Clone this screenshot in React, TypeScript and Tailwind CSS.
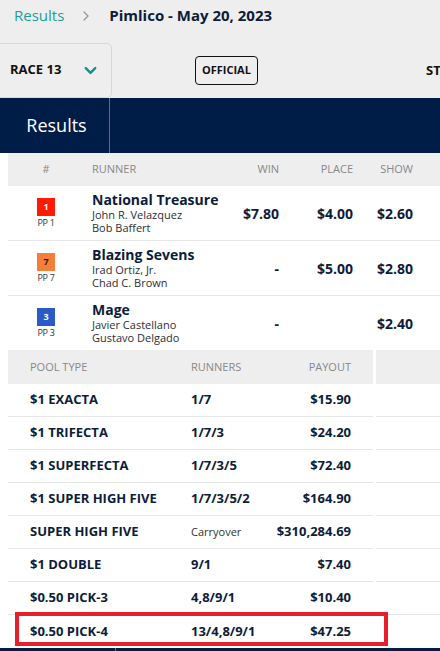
import { ChevronDown, ChevronRight } from "lucide-react";

const runners = [
    { pp: 1, color: "bg-[#ff1a00]", num: "text-white", name: "National Treasure", jockey: "John R. Velazquez", trainer: "Bob Baffert", win: "$7.80", place: "$4.00", show: "$2.60" },
    { pp: 7, color: "bg-[#f57e3b]", num: "text-[#1c1c1c]", name: "Blazing Sevens", jockey: "Irad Ortiz, Jr.", trainer: "Chad C. Brown", win: "-", place: "$5.00", show: "$2.80" },
    { pp: 3, color: "bg-[#2a5bc9]", num: "text-white", name: "Mage", jockey: "Javier Castellano", trainer: "Gustavo Delgado", win: "-", place: "", show: "$2.40" },
];

const pools = [
    { type: "$1 EXACTA", runners: "1/7", payout: "$15.90" },
    { type: "$1 TRIFECTA", runners: "1/7/3", payout: "$24.20" },
    { type: "$1 SUPERFECTA", runners: "1/7/3/5", payout: "$72.40" },
    { type: "$1 SUPER HIGH FIVE", runners: "1/7/3/5/2", payout: "$164.90" },
    { type: "SUPER HIGH FIVE", runners: "Carryover", payout: "$310,284.69", carry: true },
    { type: "$1 DOUBLE", runners: "9/1", payout: "$7.40" },
    { type: "$0.50 PICK-3", runners: "4,8/9/1", payout: "$10.40" },
    { type: "$0.50 PICK-4", runners: "13/4,8/9/1", payout: "$47.25", marked: true },
];

const App = () => {
    return (
        <div className="w-[440px] h-[651px] overflow-hidden bg-white text-[#0c1c3a] font-['Open_Sans',sans-serif]">
            {/* breadcrumb + race bar */}
            <div className="bg-[#eeeeee]">
                <div className="h-[43px] flex flex-row items-start pt-[4px] pl-[14px] text-[15px]">
                    <span className="text-[#1d9e96]">Results</span>
                    <ChevronRight className="w-[16px] h-[16px] ml-[14px] mr-[15px] mt-[4px] text-[#9a9a9a]" strokeWidth={2} />
                    <span className="font-bold">Pimlico - May 20, 2023</span>
                </div>
                <div className="h-[55px] flex flex-row items-center relative">
                    <div className="h-[55px] w-[113px] -ml-[1px] border border-[#d8d8d8] rounded-r-[5px] flex flex-row items-center pl-[10px] pb-[1px]">
                        <span className="font-bold text-[13px] text-[#111]">RACE 13</span>
                        <ChevronDown className="w-[19px] h-[19px] ml-[20px] text-[#12918a]" strokeWidth={3} />
                    </div>
                    <div className="ml-[83px] h-[29px] px-[6px] border border-[#111] rounded-[4px] flex items-center text-[11px] font-bold text-[#111]">
                        OFFICIAL
                    </div>
                    <span className="absolute left-[426px] top-[18px] font-bold text-[13px] text-[#111]">ST</span>
                </div>
            </div>

            {/* tab bar */}
            <div className="h-[55px] bg-[#001d48] flex flex-row">
                <div className="w-[110px] border-r border-[#1a8f8c] flex items-center justify-center text-white text-[18px] pl-[4px]">
                    Results
                </div>
            </div>

            <div className="pl-2">
                {/* runners */}
                <div className="h-[33px] bg-[#eeeeee] flex flex-row items-center text-[11px] text-[#888]">
                    <div className="w-[76px] text-center">#</div>
                    <div className="w-[136px] pl-2">RUNNER</div>
                    <div className="w-[59px] text-right">WIN</div>
                    <div className="w-[74px] text-right">PLACE</div>
                    <div className="w-[60px] text-right">SHOW</div>
                </div>
                {runners.map((r, i) => (
                    <div key={r.pp} className={`flex flex-row items-center ${i < 2 ? "h-[55px] border-b border-[#e6e6e6]" : "h-[54px]"}`}>
                        <div className="w-[76px] flex flex-col items-center pt-[1px]">
                            <div className={`w-[18px] h-[18px] ${r.color} ${r.num} text-[9px] font-bold flex items-center justify-center`}>{r.pp}</div>
                            <div className="text-[9px] text-[#333] mt-[1px] leading-[12px] tracking-[-0.3px]">PP {r.pp}</div>
                        </div>
                        <div className="w-[136px] pl-2 flex flex-col -mt-[1px]">
                            <span className="font-bold text-[14px] leading-[17px]">{r.name}</span>
                            <span className="text-[11px] leading-[13px] text-[#2a2f3a]">{r.jockey}</span>
                            <span className="text-[11px] leading-[13px] text-[#2a2f3a] whitespace-nowrap">{r.trainer}</span>
                        </div>
                        <div className="w-[59px] text-right font-bold text-[14px]">{r.win}</div>
                        <div className="w-[74px] text-right font-bold text-[14px]">{r.place}</div>
                        <div className="w-[60px] text-right font-bold text-[14px]">{r.show}</div>
                    </div>
                ))}

                {/* pools */}
                <div className="flex flex-row gap-[3px]">
                    <div className="w-[365px] shrink-0">
                        <div className="h-[34px] bg-[#eeeeee] flex flex-row items-center text-[11px] text-[#888] pl-[22px] pr-[22px]">
                            <div className="w-[161px]">POOL TYPE</div>
                            <div className="flex-1">RUNNERS</div>
                            <div>PAYOUT</div>
                        </div>
                        {pools.map((p) => (
                            <div key={p.type} className={`relative h-[33px] flex flex-row items-center pl-[22px] pr-[22px] ${p.marked ? "" : "border-b border-[#e6e6e6]"}`}>
                                <div className="w-[161px] font-bold text-[13px]">{p.type}</div>
                                <div className={`flex-1 ${p.carry ? "text-[11px] text-[#333]" : "font-bold text-[13px]"}`}>{p.runners}</div>
                                <div className="font-bold text-[13px]">{p.payout}</div>
                                {p.marked && (
                                    <div className="absolute left-[7px] top-[-3px] w-[373px] h-[34px] border-[4px] border-[#e81e2b] pointer-events-none" />
                                )}
                            </div>
                        ))}
                    </div>
                    <div className="flex-1">
                        <div className="h-[34px] bg-[#eeeeee]" />
                        {pools.map((p) => (
                            <div key={p.type} className={`h-[33px] ${p.marked ? "" : "border-b border-[#e6e6e6]"}`} />
                        ))}
                    </div>
                </div>
            </div>

            {/* footer bar */}
            <div className="h-[10px] bg-[#001d48] flex flex-row">
                <div className="w-[116px] border-r border-[#1a8f8c]" />
            </div>
        </div>
    );
};

export default App;
